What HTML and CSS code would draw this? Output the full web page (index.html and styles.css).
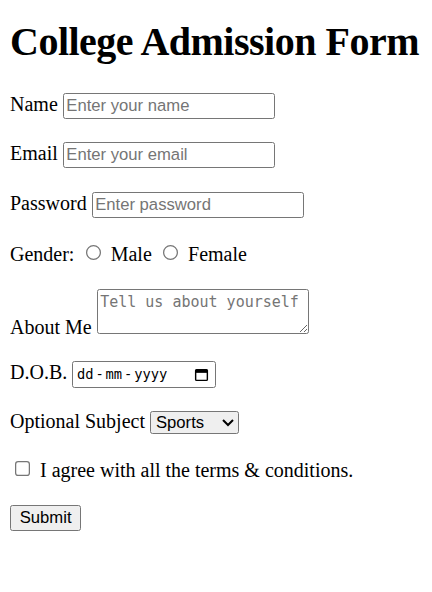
FILE: index.html
```html
<!DOCTYPE html>
<html lang="en">
<head>
<meta charset="utf-8">
<title>College Admission Form</title>
<link rel="stylesheet" href="styles.css">
</head>
<body>
<h1 class="title">College Admission Form</h1>
<form class="form">
  <div class="row"><label for="name">Name</label> <input class="field" type="text" id="name" placeholder="Enter your name"></div>
  <div class="row"><label for="email">Email</label> <input class="field" type="email" id="email" placeholder="Enter your email"></div>
  <div class="row"><label for="pwd">Password</label> <input class="field" type="password" id="pwd" placeholder="Enter password"></div>
  <div class="row">Gender: <input class="radio" type="radio" name="g" id="male"> <label for="male">Male</label> <input class="radio" type="radio" name="g" id="female"> <label for="female">Female</label></div>
  <div class="row row-about"><label for="about">About Me</label> <textarea class="about" id="about" placeholder="Tell us about yourself"></textarea></div>
  <div class="row row-tight"><label>D.O.B.</label> <span class="date"><span class="date-text">dd<span class="sep">-</span>mm<span class="sep">-</span>yyyy</span><svg class="cal" viewBox="0 0 16 16" width="12" height="12"><rect x="1.75" y="2.75" width="12.5" height="11.5" rx="1" fill="none" stroke="#000" stroke-width="1.5"/><rect x="1.75" y="2.75" width="12.5" height="3.5" fill="#000"/></svg></span></div>
  <div class="row row-snug"><label for="subj">Optional Subject</label> <select class="select" id="subj"><option>Sports</option><option>Music</option><option>Art</option></select></div>
  <div class="row"><input class="check" type="checkbox" id="agree"> <label for="agree">I agree with all the terms &amp; conditions.</label></div>
  <div class="row"><button class="submit" type="submit">Submit</button></div>
</form>
</body>
</html>
```
FILE: styles.css
```css
html {
  zoom: 1.25;
}
body {
  margin: 8px;
  font-family: "Liberation Serif", "Times New Roman", serif;
  font-size: 16px;
  color: #000;
  background: #fff;
}
.title {
  font-size: 32px;
  font-weight: bold;
  letter-spacing: -0.4px;
  white-space: nowrap;
  margin: 0 0 22px;
  padding-top: 6.5px;
}
.row {
  margin-bottom: 18.6px;
}
.row-about {
  margin-bottom: 17.5px;
}
.row-tight {
  margin-bottom: 18px;
}
.row-snug {
  margin-bottom: 18px;
}
.field {
  box-sizing: border-box;
  width: 170px;
  height: 21px;
  font-family: "Liberation Sans", Arial, sans-serif;
  font-size: 13.33px;
  padding: 1px 2px;
  border: 1px solid #767676;
  border-radius: 2px;
}
.field::placeholder {
  color: #757575;
}
.radio {
  margin: 3px 3px 0 5px;
}
.about {
  box-sizing: border-box;
  width: 170px;
  height: 36px;
  font-family: "DejaVu Sans Mono", "Liberation Mono", monospace;
  font-size: 12px;
  padding: 2px;
  border: 1px solid #767676;
  border-radius: 2px;
  resize: both;
}
.about::placeholder {
  color: #757575;
}
.date {
  display: inline-flex;
  align-items: center;
  justify-content: space-between;
  box-sizing: border-box;
  width: 115px;
  height: 21px;
  padding: 0 5px 0 3px;
  border: 1px solid #767676;
  border-radius: 2px;
}
.date-text {
  font-family: "DejaVu Sans Mono", "Liberation Mono", monospace;
  font-size: 11px;
  color: #000;
}
.sep {
  margin: 0 1.5px;
}
.cal {
  display: block;
}
.select {
  box-sizing: border-box;
  width: 71px;
  height: 19px;
  font-family: "Liberation Sans", Arial, sans-serif;
  font-size: 13.33px;
  border: 1px solid #767676;
  border-radius: 2px;
}
.check {
  margin: 3px 3px 3px 4px;
}
.submit {
  box-sizing: border-box;
  width: 57px;
  height: 21px;
  font-family: "Liberation Sans", Arial, sans-serif;
  font-size: 13.33px;
  padding: 1px 6px;
  background: #efefef;
  border: 1px solid #767676;
  border-radius: 2px;
}
```
